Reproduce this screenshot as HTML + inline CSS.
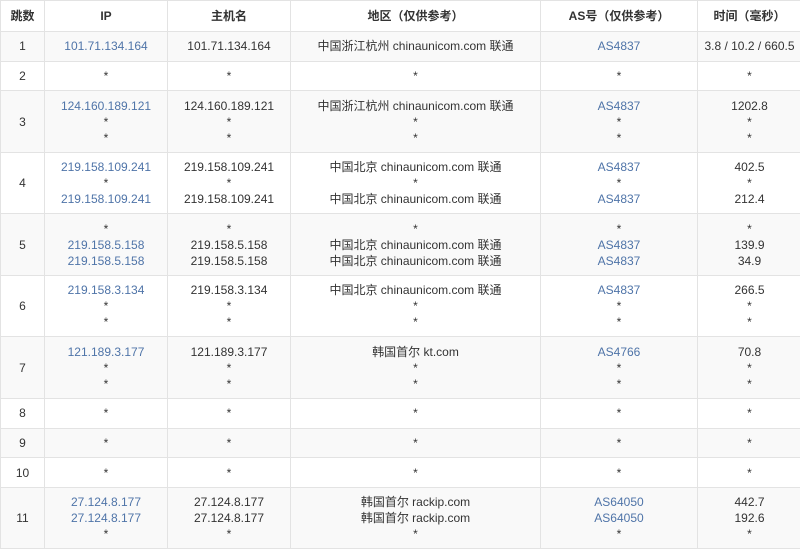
<!DOCTYPE html>
<html><head><meta charset="utf-8"><style>
body{margin:0;background:#fff;font-family:"Liberation Sans","Noto Sans CJK SC",sans-serif;font-size:12px;color:#333;}
table{border-collapse:collapse;table-layout:fixed;width:801px;}
td,th{border:1px solid #e3e3e3;text-align:center;line-height:16px;padding:0;vertical-align:middle;}
th{height:30px;font-weight:bold;}
tbody tr:nth-child(odd){background:#f9f9f9;}
tr.s td{height:28.7px;}
tr.m td{height:60.5px;}
a{color:#4f74a8;text-decoration:none;}
</style></head><body>
<table>
<colgroup><col style="width:44px"><col style="width:123px"><col style="width:123px"><col style="width:250px"><col style="width:157px"><col style="width:104px"></colgroup>
<thead><tr><th>跳数</th><th>IP</th><th>主机名</th><th>地区（仅供参考）</th><th>AS号（仅供参考）</th><th>时间（毫秒）</th></tr></thead>
<tbody>
<tr class="s"><td>1</td><td><a>101.71.134.164</a></td><td>101.71.134.164</td><td>中国浙江杭州 chinaunicom.com 联通</td><td><a>AS4837</a></td><td>3.8 / 10.2 / 660.5</td></tr>
<tr class="s"><td>2</td><td>*</td><td>*</td><td>*</td><td>*</td><td>*</td></tr>
<tr class="m"><td>3</td><td><a>124.160.189.121</a><br>*<br>*</td><td>124.160.189.121<br>*<br>*</td><td>中国浙江杭州 chinaunicom.com 联通<br>*<br>*</td><td><a>AS4837</a><br>*<br>*</td><td>1202.8<br>*<br>*</td></tr>
<tr class="m"><td>4</td><td><a>219.158.109.241</a><br>*<br><a>219.158.109.241</a></td><td>219.158.109.241<br>*<br>219.158.109.241</td><td>中国北京 chinaunicom.com 联通<br>*<br>中国北京 chinaunicom.com 联通</td><td><a>AS4837</a><br>*<br><a>AS4837</a></td><td>402.5<br>*<br>212.4</td></tr>
<tr class="m"><td>5</td><td>*<br><a>219.158.5.158</a><br><a>219.158.5.158</a></td><td>*<br>219.158.5.158<br>219.158.5.158</td><td>*<br>中国北京 chinaunicom.com 联通<br>中国北京 chinaunicom.com 联通</td><td>*<br><a>AS4837</a><br><a>AS4837</a></td><td>*<br>139.9<br>34.9</td></tr>
<tr class="m"><td>6</td><td><a>219.158.3.134</a><br>*<br>*</td><td>219.158.3.134<br>*<br>*</td><td>中国北京 chinaunicom.com 联通<br>*<br>*</td><td><a>AS4837</a><br>*<br>*</td><td>266.5<br>*<br>*</td></tr>
<tr class="m"><td>7</td><td><a>121.189.3.177</a><br>*<br>*</td><td>121.189.3.177<br>*<br>*</td><td>韩国首尔 kt.com<br>*<br>*</td><td><a>AS4766</a><br>*<br>*</td><td>70.8<br>*<br>*</td></tr>
<tr class="s"><td>8</td><td>*</td><td>*</td><td>*</td><td>*</td><td>*</td></tr>
<tr class="s"><td>9</td><td>*</td><td>*</td><td>*</td><td>*</td><td>*</td></tr>
<tr class="s"><td>10</td><td>*</td><td>*</td><td>*</td><td>*</td><td>*</td></tr>
<tr class="m"><td>11</td><td><a>27.124.8.177</a><br><a>27.124.8.177</a><br>*</td><td>27.124.8.177<br>27.124.8.177<br>*</td><td>韩国首尔 rackip.com<br>韩国首尔 rackip.com<br>*</td><td><a>AS64050</a><br><a>AS64050</a><br>*</td><td>442.7<br>192.6<br>*</td></tr>
</tbody></table>
</body></html>
